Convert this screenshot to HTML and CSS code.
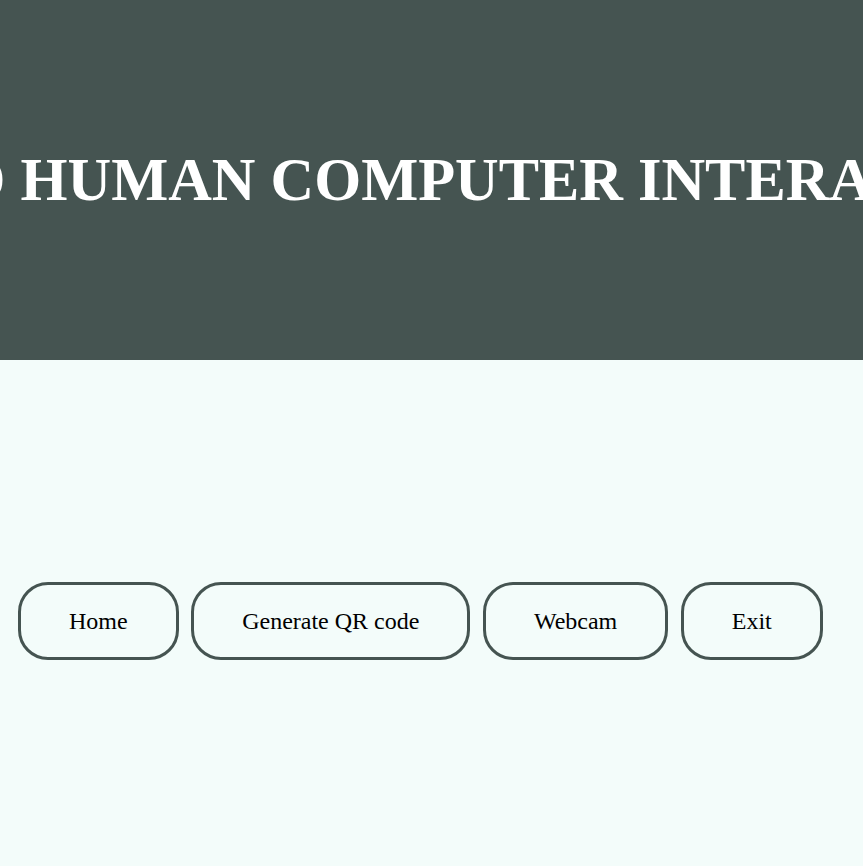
FILE: index.html
```html
<!DOCTYPE html>
<html lang="en">
<head>
<meta charset="utf-8">
<title>Human Computer Interaction</title>
<link rel="stylesheet" href="styles.css">
</head>
<body>
<header class="hero">
  <h1 class="hero-title">BASED HUMAN COMPUTER INTERACTION</h1>
</header>
<main class="main">
  <nav class="nav">
    <button class="nav-btn">Home</button>
    <button class="nav-btn">Generate QR code</button>
    <button class="nav-btn">Webcam</button>
    <button class="nav-btn">Exit</button>
  </nav>
</main>
</body>
</html>
```

FILE: styles.css
```css
html, body {
  margin: 0;
  padding: 0;
}

body {
  background: #f3fcfa;
  font-family: "Liberation Serif", "Times New Roman", serif;
  overflow: hidden;
  height: 866px;
}

.hero {
  height: 360px;
  background: #455451;
  display: flex;
  align-items: center;
  justify-content: center;
  overflow: hidden;
  padding-left: 12px;
}

.hero-title {
  margin: 0;
  color: #ffffff;
  font-size: 7vw;
  font-weight: bold;
  white-space: nowrap;
  flex-shrink: 0;
}

.main {
  padding-top: 222px;
}

.nav {
  display: flex;
  gap: 12.5px;
  padding-left: 18px;
}

.nav-btn {
  font-family: "Liberation Serif", "Times New Roman", serif;
  font-size: 24px;
  color: #000000;
  background: transparent;
  border: 3px solid #455451;
  border-radius: 30px;
  padding: 22px 48px;
  line-height: 28px;
  cursor: pointer;
}
```
